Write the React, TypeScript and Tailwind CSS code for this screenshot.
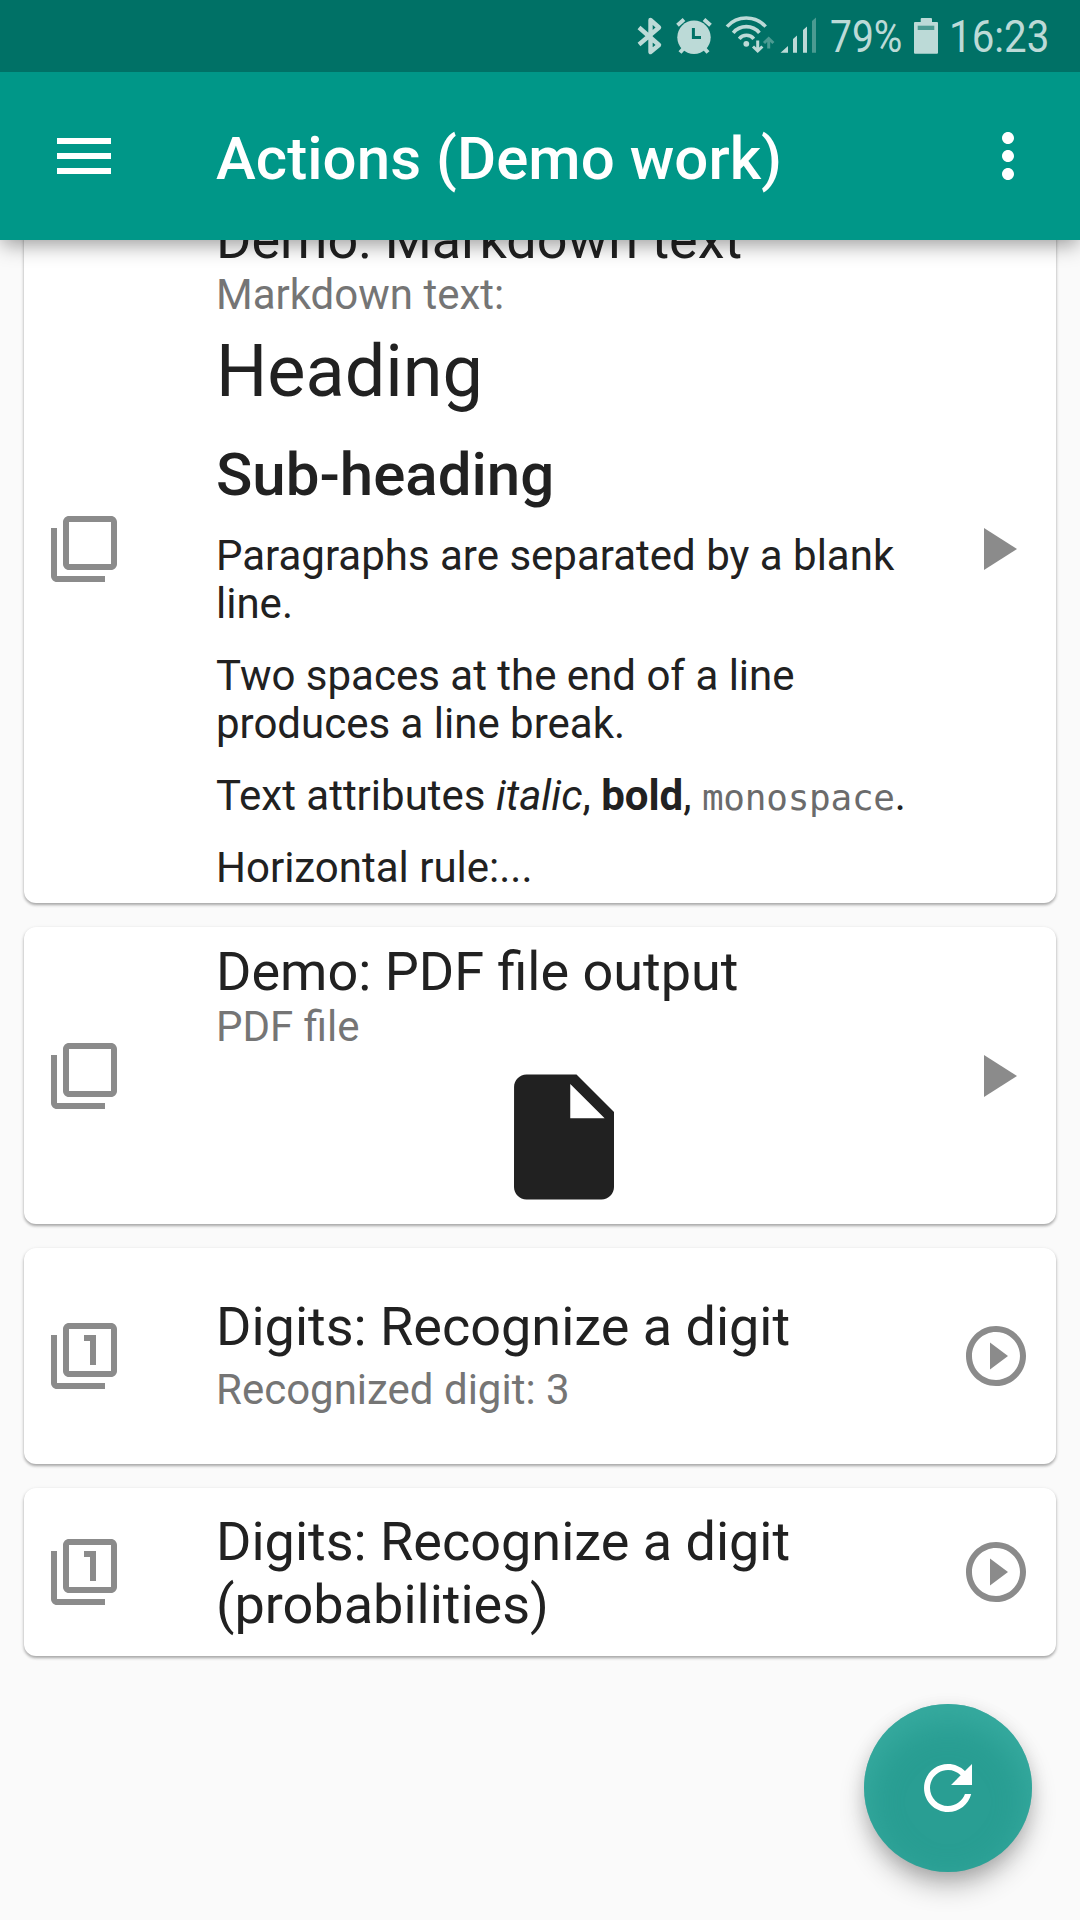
import type { ReactNode } from "react";

const FILTER_FRAME =
  "M3 5H1v16c0 1.1.9 2 2 2h16v-2H3V5zm18-4H7c-1.1 0-2 .9-2 2v14c0 1.1.9 2 2 2h14c1.1 0 2-.9 2-2V3c0-1.1-.9-2-2-2zm0 16H7V3h14v14z";
const DIGIT_ONE = "M14 15h2V5h-4v2h2v8z";
const PLAY = "M8 5v14l11-7z";
const PLAY_CIRCLE =
  "M10 16.5l6-4.5-6-4.5v9zM12 2C6.48 2 2 6.48 2 12s4.48 10 10 10 10-4.48 10-10S17.52 2 12 2zm0 18c-4.41 0-8-3.59-8-8s3.59-8 8-8 8 3.59 8 8-3.59 8-8 8z";
const FILE =
  "M6 2c-1.1 0-1.99.9-1.99 2L4 20c0 1.1.89 2 1.99 2H18c1.1 0 2-.9 2-2V8l-6-6H6zm7 7V3.5L18.5 9H13z";
const MENU = "M3 18h18v-2H3v2zm0-5h18v-2H3v2zm0-7v2h18V6H3z";
const MORE =
  "M12 8c1.1 0 2-.9 2-2s-.9-2-2-2-2 .9-2 2 .9 2 2 2zm0 2c-1.1 0-2 .9-2 2s.9 2 2 2 2-.9 2-2-.9-2-2-2zm0 6c-1.1 0-2 .9-2 2s.9 2 2 2 2-.9 2-2-.9-2-2-2z";
const REFRESH =
  "M17.65 6.35C16.2 4.9 14.21 4 12 4c-4.42 0-7.99 3.58-7.99 8s3.57 8 7.99 8c3.73 0 6.84-2.55 7.73-6h-2.08c-.82 2.33-3.04 4-5.65 4-3.31 0-6-2.69-6-6s2.69-6 6-6c1.66 0 3.14.69 4.22 1.78L13 11h7V4l-2.35 2.35z";

function Icon({ d, className = "size-[72px]" }: { d: string; className?: string }) {
  return (
    <svg viewBox="0 0 24 24" fill="currentColor" className={`${className} shrink-0`}>
      <path d={d} />
    </svg>
  );
}

function StatusBar() {
  return (
    <div className="flex h-[72px] items-center bg-[#007166] pl-[634px] text-[#bcdad7]">
      <svg width="32" height="72" viewBox="634 0 32 72" fill="none" stroke="currentColor" strokeWidth="4.4" strokeLinejoin="round">
        <path d="M639 27.5 L659 45 L650.5 52 V20 L659 27.5 L639 44.5" />
      </svg>
      <svg width="40" height="72" viewBox="674 0 40 72" className="ml-2" fill="none" stroke="currentColor" strokeWidth="4">
        <circle cx="694" cy="37.3" r="16.7" fill="currentColor" stroke="none" />
        <path d="M677.5 25.2 L684 19.5 M704 19.5 L710.5 25.2 M680 52.5 L684 48 M708 52.5 L704 48" />
        <path d="M693.4 28 V37.5 H701" stroke="#007166" strokeWidth="3" />
      </svg>
      <svg width="52" height="72" viewBox="724 0 52 72" className="ml-[10px]" fill="none" stroke="currentColor" strokeWidth="3.6">
        <path d="M727 26.6 A26 26 0 0 1 765.6 26.6 M733.2 32.8 A17 17 0 0 1 759.4 32.8 M739.2 38.8 A9.4 9.4 0 0 1 753.8 38.8" />
        <circle cx="746.3" cy="43.8" r="2.9" fill="currentColor" stroke="none" />
        <path d="M757.7 40.5 V51 M753 46.5 L757.7 51 L762.4 46.5" strokeWidth="3" />
        <path d="M768.7 48.5 V38.5 M764 43 L768.7 38.5 L773.4 43" stroke="#4b9b92" strokeWidth="3" />
      </svg>
      <svg width="38" height="72" viewBox="780 0 38 72" className="ml-1" fill="currentColor">
        <path d="M780.5 52.8 L788 46 V52.8z M793 52.8 V39 L797 35.5 V52.8z M803 52.8 V30 L807 26.5 V52.8z" />
        <path d="M812 52.8 V21 L816 17.5 V52.8z" fill="#4b9b92" />
      </svg>
      <span className="ml-[12px] w-[84px] origin-left scale-x-[0.865] text-[45px] leading-[72px]">
        <span className="relative top-[1px]">79%</span>
      </span>
      <svg width="28" height="72" viewBox="912 0 28 72" className="-ml-[2px]" fill="currentColor">
        <path d="M920.7 22 V19 Q920.7 18 921.7 18 H931 Q932 18 932 19 V22 H937 Q938 22 938 23 V52.7 Q938 53.7 937 53.7 H915 Q914 53.7 914 52.7 V23 Q914 22 915 22z" />
        <path d="M917.7 25.7 H934.3 V30 H917.7z" fill="#4b9b92" />
      </svg>
      <span className="ml-[9px] origin-left scale-x-[0.895] text-[45px] leading-[72px]">
        <span className="relative top-[1px]">16:23</span>
      </span>
    </div>
  );
}

function AppBar() {
  return (
    <div className="flex h-[168px] items-center bg-[#009788] pr-9 pl-12 text-white">
      <Icon d={MENU} />
      <h1 className="ml-24 flex-1 pt-[5px] text-[60px] leading-[72px] font-medium tracking-[0.06px]">Actions (Demo work)</h1>
      <Icon d={MORE} />
    </div>
  );
}

type CardProps = { icon: string; action: string; title: string; bodyClass: string; children?: ReactNode };

function ActionCard({ icon, action, title, bodyClass, children }: CardProps) {
  return (
    <article className="flex items-center rounded-xl bg-white px-6 text-[#8b8b8b] shadow-[0_2px_3px_rgba(0,0,0,0.3),0_1px_4px_rgba(0,0,0,0.08)]">
      <Icon d={icon} />
      <div className={`${bodyClass} ml-24 w-[696px] self-start`}>
        <h2 className="text-[54px] leading-[63px] text-[#212121]">{title}</h2>
        {children}
      </div>
      <Icon d={action} className="ml-12 size-[72px]" />
    </article>
  );
}

function Subtitle({ children }: { children: ReactNode }) {
  return <p className="text-[42px] leading-[48px] text-[#757575]">{children}</p>;
}

export default function App() {
  return (
    <div className="flex h-[1920px] w-[1080px] flex-col overflow-hidden bg-[#fafafa] font-['Roboto',sans-serif]">
      <header className="relative z-10 shadow-[0_6px_20px_-2px_rgba(0,0,0,0.42)]">
        <StatusBar />
        <AppBar />
      </header>

      <main className="flex-1 overflow-hidden px-6">
        <div className="-mt-[45px] flex flex-col gap-6">
          <ActionCard icon={FILTER_FRAME} action={PLAY} title="Demo: Markdown text" bodyClass="h-[708px] pt-[13px]">
            <Subtitle>Markdown text:</Subtitle>
            <div className="pt-[11px] text-[42px] leading-[48px] text-[#212121]">
              <h3 className="text-[72px] leading-[84px]">Heading</h3>
              <h4 className="mt-[25px] text-[60px] leading-[72px] font-medium">Sub-heading</h4>
              <div className="mt-[21px] flex flex-col gap-6">
                <p>Paragraphs are separated by a blank line.</p>
                <p>
                  Two spaces at the end of a line
                  <br />
                  produces a line break.
                </p>
                <p className="h-12 whitespace-nowrap">
                  Text attributes <em>italic</em>, <b>bold</b>,{" "}
                  <code className="font-['DejaVu_Sans_Mono',monospace] text-[36px] leading-none tracking-[-0.25px] text-[#6b6b6b]">monospace</code>.
                </p>
                <p>Horizontal rule:...</p>
              </div>
            </div>
          </ActionCard>

          <ActionCard icon={FILTER_FRAME} action={PLAY} title="Demo: PDF file output" bodyClass="h-[297px] pt-[13px]">
            <Subtitle>PDF file</Subtitle>
            <div className="flex justify-center pt-[11px] text-[#212121]">
              <Icon d={FILE} className="size-[150px]" />
            </div>
          </ActionCard>

          <ActionCard icon={FILTER_FRAME + DIGIT_ONE} action={PLAY_CIRCLE} title="Digits: Recognize a digit" bodyClass="h-[216px] pt-[47px]">
            <div className="pt-2">
              <Subtitle>Recognized digit: 3</Subtitle>
            </div>
          </ActionCard>

          <ActionCard
            icon={FILTER_FRAME + DIGIT_ONE}
            action={PLAY_CIRCLE}
            title="Digits: Recognize a digit (probabilities)"
            bodyClass="h-[168px] pt-[22px]"
          />
        </div>
      </main>

      <button className="absolute top-[1704px] left-[864px] flex size-[168px] items-center justify-center rounded-full bg-[#299e93] text-white shadow-[0_16px_28px_-4px_rgba(0,0,0,0.3),0_4px_18px_rgba(0,0,0,0.1),inset_0_14px_30px_4px_rgba(64,178,166,0.6)]">
        <Icon d={REFRESH} />
      </button>
    </div>
  );
}
